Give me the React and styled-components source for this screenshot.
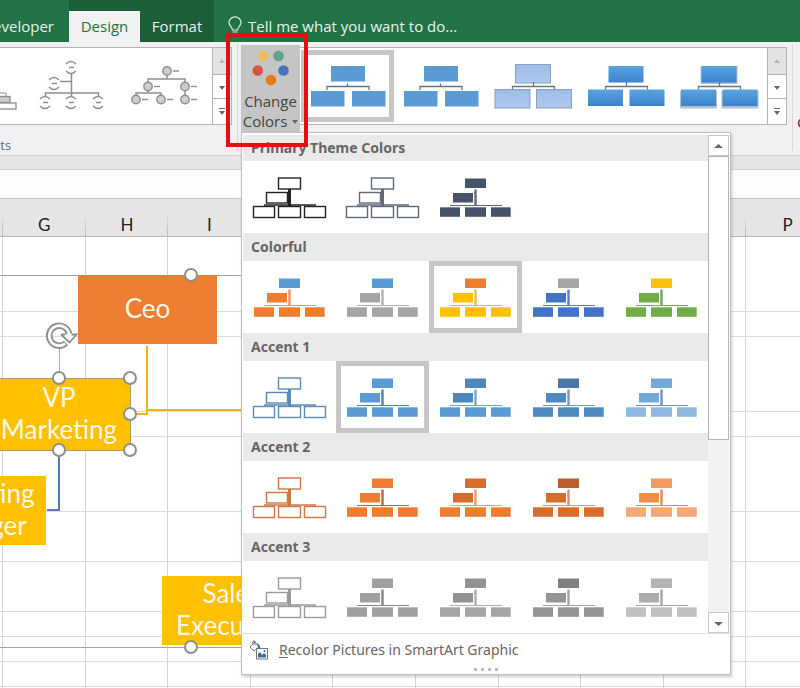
import React from 'react';
import styled, { createGlobalStyle } from 'styled-components';

const GlobalStyle = createGlobalStyle`
  * {
    box-sizing: border-box;
  }

  body {
    margin: 0;
    background: #fff;
    font-family: 'Open Sans', 'Noto Sans', sans-serif;
  }

  button {
    margin: 0;
    padding: 0;
    border: 0;
    background: none;
    color: inherit;
    font: inherit;
    cursor: pointer;
  }
`;

const Page = styled.div`
  display: flex;
  flex-direction: column;
  min-height: 100vh;
  overflow: hidden;
`;

// Title bar and tabs
const TabBar = styled.nav`
  display: flex;
  align-items: stretch;
  height: 42px;
  background: #217346;
  color: #e6f2ea;
  font-size: 15px;
  line-height: 20px;
`;

const Tab = styled.button`
  width: ${({ $width }) => $width}px;
  padding-bottom: 2px;
  white-space: nowrap;
`;

const ClippedTab = styled(Tab)`
  display: flex;
  align-items: center;
  justify-content: flex-end;
  padding: 11px 15px 2px 0;
`;

const ContextTabs = styled.div`
  display: flex;
  padding-top: 11px;
  background: #1b5e38;
`;

const ActiveTab = styled(Tab)`
  background: #f1f1f1;
  color: #217346;
`;

const TellMe = styled.button`
  display: flex;
  align-items: center;
  gap: 6px;
  padding: 11px 0 2px 14px;
  white-space: nowrap;
`;

// Ribbon
const Ribbon = styled.div`
  display: flex;
  height: 114px;
  padding-top: 3px;
  background: #f1f1f1;
  border-bottom: 1px solid #cfcfcf;
`;

const RibbonGroup = styled.section`
  display: flex;
  flex: ${({ $grow }) => ($grow ? '1 1 0' : '0 0 238px')};
  flex-direction: column;
  min-width: 0;
  height: 106px;
  padding: 2px 5px 0 0;
  border-right: 1px solid #d8d8d8;
`;

const GroupLabel = styled.div`
  margin: 10px 0 0 -36px;
  color: #666;
  font-size: 13px;
  line-height: 20px;
`;

const Gallery = styled.div`
  display: flex;
  height: 78px;
  background: #fff;
  border: 1px solid #b4b4b4;
  border-left: 0;
`;

const GalleryItems = styled.div`
  display: flex;
  flex: 1;
  justify-content: ${({ $end }) => ($end ? 'flex-end' : 'flex-start')};
  min-width: 0;
  padding: 2px 1px;
  overflow: hidden;
`;

const GalleryItem = styled.button`
  flex: 0 0 93px;
  height: 72px;
  box-shadow: ${({ $selected }) => ($selected ? 'inset 0 0 0 5px #c6c6c6' : 'none')};

  svg {
    display: block;
  }
`;

const Scroller = styled.div`
  display: grid;
  grid-template-rows: 27px 24px 25px;
  width: 19px;
  border-left: 1px solid #b4b4b4;
`;

const ScrollerButton = styled.button`
  display: flex;
  align-items: center;
  justify-content: center;
  border-bottom: 1px solid #b4b4b4;
  background: #fff;

  &:disabled {
    background: #e4e4e4;
  }

  &:last-child {
    border-bottom: 0;
  }
`;

const ColorsAnchor = styled.div`
  position: relative;
  flex: 0 0 59px;
  height: 87px;
  margin-left: 3px;
`;

const ChangeColorsButton = styled.button`
  display: flex;
  flex-direction: column;
  align-items: center;
  width: 100%;
  height: 100%;
  background: #c5c5c5;
  color: #444;
  font-size: 15px;
  line-height: 20px;
  white-space: nowrap;
`;

const ButtonLine = styled.span`
  display: flex;
  align-items: center;
  gap: 5px;
`;

// Red frame around the button
const Highlight = styled.div`
  position: absolute;
  z-index: 3;
  top: -12px;
  left: -15px;
  width: 82px;
  height: 114px;
  border: 4px solid #e30f13;
  pointer-events: none;
`;

const NextGroup = styled.div`
  flex: 0 0 7px;
  padding: 67px 0 0 4px;
  overflow: hidden;
  color: #333;
  font-size: 15px;
  line-height: 20px;
`;

// Colors menu
const Menu = styled.div`
  position: absolute;
  z-index: 2;
  top: 100%;
  left: 0;
  width: 490px;
  padding: 2px 1px 1px;
  background: #fff;
  border: 1px solid #c0c0c0;
  box-shadow: 1px 2px 3px rgba(0, 0, 0, 0.2);
  color: #666;
  font-family: 'Noto Sans', sans-serif;
`;

const MenuBody = styled.div`
  display: flex;
  height: 499px;
  border-bottom: 1px solid #e1e1e1;
`;

const MenuList = styled.div`
  flex: 1;
  overflow: hidden;
`;

const MenuHeading = styled.h3`
  height: 28px;
  margin: 0;
  padding-left: 8px;
  background: #eaeaea;
  font-size: 14px;
  font-weight: 700;
  line-height: 28px;

  &:first-child {
    height: 26px;
    line-height: 26px;
  }
`;

const Swatches = styled.div`
  display: flex;
  height: 72px;
`;

const ScrollBar = styled.div`
  display: flex;
  flex: 0 0 21px;
  flex-direction: column;
  background: #f2f2f2;
`;

const ScrollArrow = styled.button`
  display: flex;
  align-items: center;
  justify-content: center;
  height: 21px;
  background: #fff;
  border: 1px solid #c8c8c8;
`;

const ScrollThumb = styled.div`
  height: 284px;
  margin-bottom: auto;
  background: #fff;
  border: 1px solid #b4b4b4;
`;

const RecolorButton = styled.button`
  display: flex;
  align-items: center;
  gap: 10px;
  height: 32px;
  padding-left: 6px;
  font-size: 14px;
  line-height: 20px;

  u {
    text-underline-offset: 2px;
  }
`;

const Grip = styled.div`
  display: flex;
  justify-content: center;
  gap: 4px;
  height: 7px;
  padding-top: 2px;

  i {
    width: 3px;
    height: 3px;
    background: #bbb;
  }
`;

// Worksheet
const FormulaBar = styled.div`
  height: 43px;
  padding-top: 13px;
  background: #e6e6e6;

  div {
    height: 30px;
    background: #fdfdfd;
    border-top: 1px solid #cfcfcf;
    border-bottom: 1px solid #c6c6c6;
  }
`;

const Sheet = styled.main`
  position: relative;
  z-index: 0;
  flex: 1;
  overflow: hidden;
`;

const Grid = styled.table`
  width: calc(100% + 29px);
  table-layout: fixed;
  border-collapse: separate;
  border-spacing: 0;

  th {
    height: 38px;
    padding: 15px 0 0;
    border-bottom: 1px solid #b8b8b8;
    background: linear-gradient(#e6e6e6, #b8b8b8) right 14px / 1px 24px no-repeat #e6e6e6;
    color: #222;
    font: 400 17px/22px 'Lato', sans-serif;
  }

  td {
    padding: 0;
    border-right: 1px solid #d6d6d6;
    border-bottom: 1px solid #dcdcdc;
  }
`;

const GridRow = styled.tr`
  height: ${({ $height }) => $height}px;
`;

const Canvas = styled.div`
  position: absolute;
  top: 38px;
  left: 0;
`;

const Connectors = styled.svg`
  position: absolute;
  top: 0;
  left: 0;
`;

const Frame = styled.div`
  position: absolute;
  top: 38px;
  left: -20px;
  width: 422px;
  height: 373px;
  border: 1px solid #a3a3a3;
`;

const Node = styled.div`
  position: absolute;
  top: ${({ $y }) => $y}px;
  left: ${({ $x }) => $x}px;
  display: flex;
  align-items: center;
  justify-content: center;
  width: ${({ $w }) => $w || 139}px;
  height: ${({ $h }) => $h || 69}px;
  padding-bottom: 3px;
  background: ${({ $color }) => $color};
  color: #fff8e6;
  font-family: 'Lato', sans-serif;
  font-size: 26px;
  line-height: 32px;
  text-align: center;
  outline: ${({ $active }) => ($active ? '1px solid #a59a78' : 'none')};
`;

const Handle = styled.i`
  position: absolute;
  top: ${({ $y }) => $y - 7}px;
  left: ${({ $x }) => $x - 7}px;
  width: 14px;
  height: 14px;
  background: #fff;
  border: 2px solid #8f8f8f;
  border-radius: 50%;
`;

const columns = ['', 'G', 'H', 'I', 'J', 'K', 'L', 'M', 'N', 'O', 'P'];
const rowHeights = [75, 25, 75, 25, 75, 50, 50, 25, 25, 25, 25];

const handles = [
  [191, 38],
  [59, 141],
  [130, 141],
  [130, 177],
  [130, 213],
  [59, 213],
  [191, 410],
];

// Each swatch: top box, assistant box, bottom boxes, line
const fill = (top, side, bottom, line) => ({ top, side, bottom, line });
const outline = (color) => ({ outlined: true, line: color });

const colorGroups = [
  {
    title: 'Primary Theme Colors',
    items: [outline('#222222'), outline('#5f6b7a'), fill('#465469', '#465469', '#465469', '#5f6b7a')],
  },
  {
    title: 'Colorful',
    selected: 2,
    items: [
      fill('#5b9bd5', '#ed7d31', '#ed7d31', '#ed9360'),
      fill('#5b9bd5', '#a5a5a5', '#a5a5a5', '#b0b0b0'),
      fill('#ed7d31', '#ffc000', '#ffc000', '#edbd45'),
      fill('#a5a5a5', '#4472c4', '#4472c4', '#5f82bf'),
      fill('#f9c00c', '#70ad47', '#70ad47', '#78a360'),
    ],
  },
  {
    title: 'Accent 1',
    selected: 1,
    items: [
      outline('#5a8ab5'),
      fill('#5b9bd5', '#5b9bd5', '#5b9bd5', '#5280a8'),
      fill('#4f87ba', '#4f87ba', '#5b9bd5', '#78a5cf'),
      fill('#4878a8', '#5089bf', '#5089bf', '#7797bb'),
      fill('#74a9dc', '#74a9dc', '#8fb8e0', '#7293b5'),
    ],
  },
  {
    title: 'Accent 2',
    items: [
      outline('#cf7745'),
      fill('#ed7d31', '#ed7d31', '#ed7d31', '#bd6b39'),
      fill('#d46d2d', '#d46d2d', '#ed7d31', '#ee9b70'),
      fill('#b8602b', '#d46d2d', '#d46d2d', '#dd9369'),
      fill('#f09a60', '#ee8d4c', '#f2a878', '#e28858'),
    ],
  },
  {
    title: 'Accent 3',
    items: [
      outline('#9a9a9a'),
      fill('#a0a0a0', '#a0a0a0', '#a0a0a0', '#858585'),
      fill('#929292', '#929292', '#a5a5a5', '#aeaeae'),
      fill('#808080', '#949494', '#949494', '#a5a5a5'),
      fill('#b4b4b4', '#acacac', '#c0c0c0', '#a5a5a5'),
    ],
  },
];

const Swatch = ({ color }) => {
  if (color.outlined) {
    return (
      <svg width="93" height="72" fill="none" stroke={color.line} aria-hidden="true">
        <path d="M21 44H73" strokeWidth="1.5" />
        <g strokeWidth="1.4" fill="#fff">
          <rect x="35.5" y="17" width="22" height="11" />
          <rect x="23.5" y="31.5" width="21" height="10.5" />
          <rect x="10.5" y="45.5" width="21" height="11" />
          <rect x="35.5" y="45.5" width="22" height="11" />
          <rect x="61.5" y="45.5" width="21" height="11" />
        </g>
        <path d="M46.5 28V45" strokeWidth="3" />
      </svg>
    );
  }
  return (
    <svg width="93" height="72" aria-hidden="true">
      <path d="M46.5 28.5V45" stroke={color.line} strokeWidth="2.4" />
      <path d="M21 44.5H73" stroke={color.line} strokeWidth="1.2" />
      <rect x="36" y="17.5" width="21" height="9.5" fill={color.top} />
      <rect x="24" y="32" width="20" height="9.5" fill={color.side} />
      <g fill={color.bottom}>
        <rect x="11" y="46.3" width="20" height="9.5" />
        <rect x="36" y="46.3" width="21" height="9.5" />
        <rect x="62" y="46.3" width="19.7" height="9.5" />
      </g>
    </svg>
  );
};

const styleThumbs = ['flat', 'flat', 'subtle', 'moderate', 'intense'];

const StyleThumb = ({ kind }) => {
  const flat = kind === 'flat';
  const tall = kind === 'subtle' ? 18.5 : 16.5;
  return (
    <svg width="93" height="72" aria-hidden="true">
      <defs>
        <linearGradient id="subtle" x2="0" y2="1">
          <stop offset="0" stopColor="#9dbce8" />
          <stop offset="1" stopColor="#b0caee" />
        </linearGradient>
        <linearGradient id="moderate" x2="0" y2="1">
          <stop offset="0" stopColor="#5ba2e0" />
          <stop offset="1" stopColor="#3a84cd" />
        </linearGradient>
      </defs>
      {kind === 'intense' && (
        <g fill="#7f97b5" opacity="0.6">
          <rect x="27.5" y="16" width="37" height="18" rx="1" />
          <rect x="7" y="40.5" width="37" height="18" rx="1" />
          <rect x="48.5" y="40.5" width="37" height="18" rx="1" />
        </g>
      )}
      <g
        fill={flat ? '#5b9bd5' : `url(#${kind === 'subtle' ? 'subtle' : 'moderate'})`}
        stroke={kind === 'subtle' ? '#8d9fbd' : 'none'}
      >
        <rect x={flat ? 30 : 28.5} y={kind === 'subtle' ? 14.5 : 16} width={flat ? 34 : 35} height={flat ? 15.5 : tall} />
        <rect x={flat ? 10 : 8} y={flat ? 41 : 39.5} width={flat ? 33.5 : 35} height={flat ? 15.5 : tall} />
        <rect x={flat ? 51 : 49.5} y={flat ? 41 : 39.5} width={flat ? 33.5 : 35} height={flat ? 15.5 : tall} />
      </g>
      <path
        d={flat ? 'M46.5 33.5V36.5M26 40V36.5H68V40' : 'M46.5 32V36.5M25.5 39.5V36.5H67.5V39.5'}
        fill="none"
        stroke="#60788f"
        strokeWidth="1.3"
      />
    </svg>
  );
};

const arcs = [[46, 17], [29, 33], [20, 52], [46, 52], [73, 52]];
const dots = [[49, 21], [30, 36.5], [67, 36.5], [18, 49.5], [43, 49.5], [67, 49.5]];

const StackedLayout = () => (
  <svg width="93" height="72" fill="none" stroke="#8e8e8e" aria-hidden="true">
    <path d="M62 43H74V47" />
    <rect x="62" y="46.5" width="16" height="6" fill="#c9c9c9" strokeWidth="1.3" />
    <rect x="60" y="53" width="24" height="6" fill="#fff" strokeWidth="1.3" />
  </svg>
);

const HalfCircleLayout = () => (
  <svg width="93" height="72" fill="none" stroke="#8e8e8e" strokeWidth="1.5" aria-hidden="true">
    <path d="M46.5 24V43M35 31.5H46M20.5 47V43H73.5V47M46.5 43V47" />
    {arcs.map(([x, y]) => (
      <path
        key={`${x}-${y}`}
        d={`M${x - 5} ${y - 3}Q${x} ${y - 8} ${x + 5} ${y - 3}M${x - 5} ${y + 4}Q${x} ${y + 9} ${x + 5} ${y + 4}M${x - 2} ${y + 0.5}H${x + 3}`}
      />
    ))}
  </svg>
);

const CirclePictureLayout = () => (
  <svg width="93" height="72" fill="none" stroke="#8e8e8e" strokeWidth="1.4" aria-hidden="true">
    <path d="M49 25V29M30 34V29H67V46M30 40V43M18 47V43H43V47" />
    {dots.map(([x, y]) => (
      <g key={`${x}-${y}`}>
        <circle cx={x} cy={y} r="4.2" fill="#cecece" />
        <path d={`M${x + 6} ${y}H${x + 12}`} />
      </g>
    ))}
  </svg>
);

const Arrow = ({ up, bar, width = 6, color = '#666' }) => (
  <svg width={width} height="8" viewBox="0 0 6 8" preserveAspectRatio="none" fill={color} aria-hidden="true">
    {bar && <path d="M0 0H6V1H0Z" />}
    <path d={up ? 'M0 6L3 2L6 6Z' : 'M0 3L3 7L6 3Z'} />
  </svg>
);

const GalleryScroller = () => (
  <Scroller>
    <ScrollerButton disabled aria-label="Row up">
      <Arrow up color="#b5b5b5" />
    </ScrollerButton>
    <ScrollerButton aria-label="Row down">
      <Arrow />
    </ScrollerButton>
    <ScrollerButton aria-label="More">
      <Arrow bar />
    </ScrollerButton>
  </Scroller>
);

const Bulb = () => (
  <svg width="14" height="20" viewBox="0 0 14 20" fill="none" stroke="#dcebe1" strokeWidth="1.2" aria-hidden="true">
    <path d="M4.5 14C4.5 11 1 10 1 6.5A6 5.7 0 0 1 13 6.5C13 10 9.5 11 9.5 14ZM4.5 16H9.5M5.5 18H8.5" />
  </svg>
);

const ColorDots = () => (
  <svg width="40" height="46" aria-hidden="true">
    <circle cx="12" cy="11" r="5.3" fill="#eebb62" />
    <circle cx="27.5" cy="11" r="5.3" fill="#5fa58a" />
    <circle cx="6.8" cy="25.5" r="5.3" fill="#d35745" />
    <circle cx="32.5" cy="25.5" r="5.3" fill="#4577b8" />
    <circle cx="20" cy="35" r="5.3" fill="#e67a17" />
  </svg>
);

const RecolorIcon = () => (
  <svg width="20" height="20" fill="none" aria-hidden="true">
    <path d="M2 6L6 2L10 7L5 11L1 7Z" stroke="#777" />
    <path d="M4 5V1H6V5" stroke="#777" />
    <path d="M8 3Q12 5 11 10L9 7Z" fill="#3b6ea5" />
    <rect x="7.5" y="8.5" width="11" height="10.5" fill="#fff" stroke="#777" />
    <path d="M9 17.5V14L11 12L13 15L15 13L17 15V17.5Z" fill="#3b6ea5" />
    <circle cx="15.5" cy="11" r="1" fill="#3b6ea5" />
  </svg>
);

const RotateHandle = () => (
  <Connectors width="90" height="120" fill="none">
    <path d="M66 106A10 10 0 1 1 69 97" stroke="#8f8f8f" strokeWidth="6.5" />
    <path d="M65.3 106.700A10 10 0 1 1 69.300 98" stroke="#fff" strokeWidth="2.8" />
    <path d="M61 97.500H65.500M61 97.500L69.500 105.500L76.500 97.500H71.500" fill="#fff" stroke="#8f8f8f" strokeWidth="1.8" />
  </Connectors>
);

const ColorsMenu = () => (
  <Menu>
    <MenuBody>
      <MenuList>
        {colorGroups.map((group) => (
          <React.Fragment key={group.title}>
            <MenuHeading>{group.title}</MenuHeading>
            <Swatches>
              {group.items.map((color, index) => (
                <GalleryItem
                  key={index}
                  $selected={group.selected === index}
                  aria-label={`${group.title} ${index + 1}`}
                >
                  <Swatch color={color} />
                </GalleryItem>
              ))}
            </Swatches>
          </React.Fragment>
        ))}
      </MenuList>
      <ScrollBar>
        <ScrollArrow aria-label="Scroll up">
          <Arrow up width={9} />
        </ScrollArrow>
        <ScrollThumb />
        <ScrollArrow aria-label="Scroll down">
          <Arrow width={9} />
        </ScrollArrow>
      </ScrollBar>
    </MenuBody>
    <RecolorButton>
      <RecolorIcon />
      <span>
        <u>R</u>ecolor Pictures in SmartArt Graphic
      </span>
    </RecolorButton>
    <Grip>
      <i />
      <i />
      <i />
      <i />
    </Grip>
  </Menu>
);

const Worksheet = () => (
  <Sheet>
    <Grid>
      <colgroup>
        {columns.map((name) => (
          <col key={name} width={name ? undefined : 3} />
        ))}
      </colgroup>
      <thead>
        <tr>
          {columns.map((name) => (
            <th key={name}>{name}</th>
          ))}
        </tr>
      </thead>
      <tbody>
        {rowHeights.map((height, row) => (
          <GridRow key={row} $height={height}>
            {columns.map((name) => (
              <td key={name} />
            ))}
          </GridRow>
        ))}
      </tbody>
    </Grid>
    <Canvas>
      <Frame />
      <Connectors width="400" height="450" fill="none" strokeWidth="2">
        <path d="M147 109V177H131M147 173H300" stroke="#edb41c" />
        <path d="M59 213V273H47" stroke="#5579b8" />
        <path d="M59.5 109V141" stroke="#b0b0b0" strokeWidth="1" />
      </Connectors>
      <Node $x={78} $y={38} $color="#ed7d31">
        Ceo
      </Node>
      <Node $x={-12} $y={142} $w={142} $h={71} $color="#ffc000" $active>
        VP
        <br />
        Marketing
      </Node>
      <Node $x={-93} $y={239} $color="#ffc000">
        Marketing
        <br />
        Manager
      </Node>
      <Node $x={162} $y={339} $color="#ffc000">
        Sales
        <br />
        Executive
      </Node>
      {handles.map(([x, y]) => (
        <Handle key={`${x}-${y}`} $x={x} $y={y} />
      ))}
      <RotateHandle />
    </Canvas>
  </Sheet>
);

const App = () => (
  <>
    <GlobalStyle />
    <Page>
      <TabBar>
        <ClippedTab $width={69}>Developer</ClippedTab>
        <ContextTabs>
          <ActiveTab $width={71}>Design</ActiveTab>
          <Tab $width={74}>Format</Tab>
        </ContextTabs>
        <TellMe>
          <Bulb />
          Tell me what you want to do...
        </TellMe>
      </TabBar>

      <Ribbon>
        <RibbonGroup>
          <Gallery>
            <GalleryItems $end>
              <GalleryItem aria-label="Stacked layout">
                <StackedLayout />
              </GalleryItem>
              <GalleryItem aria-label="Half circle layout">
                <HalfCircleLayout />
              </GalleryItem>
              <GalleryItem aria-label="Circle picture layout">
                <CirclePictureLayout />
              </GalleryItem>
            </GalleryItems>
            <GalleryScroller />
          </Gallery>
          <GroupLabel>Layouts</GroupLabel>
        </RibbonGroup>

        <ColorsAnchor>
          <ChangeColorsButton>
            <ColorDots />
            <span>Change</span>
            <ButtonLine>
              Colors <Arrow />
            </ButtonLine>
          </ChangeColorsButton>
          <ColorsMenu />
          <Highlight />
        </ColorsAnchor>

        <RibbonGroup $grow>
          <Gallery>
            <GalleryItems>
              {styleThumbs.map((kind, index) => (
                <GalleryItem key={index} $selected={index === 0} aria-label={`Style ${index + 1}`}>
                  <StyleThumb kind={kind} />
                </GalleryItem>
              ))}
            </GalleryItems>
            <GalleryScroller />
          </Gallery>
        </RibbonGroup>
        <NextGroup>Graphic</NextGroup>
      </Ribbon>

      <FormulaBar>
        <div />
      </FormulaBar>
      <Worksheet />
    </Page>
  </>
);

export default App;
